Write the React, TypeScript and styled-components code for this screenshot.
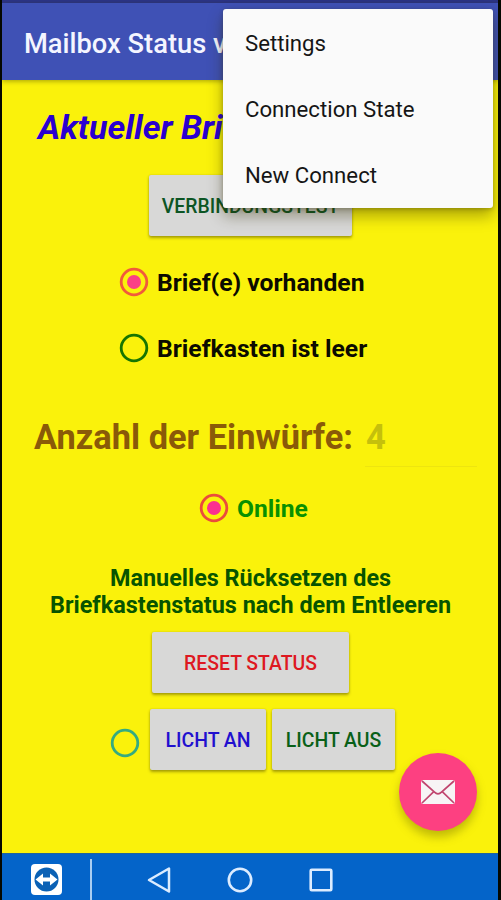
import React from 'react';
import styled, { createGlobalStyle } from 'styled-components';

const GlobalStyle = createGlobalStyle`
  * { box-sizing: border-box; }
  body { margin: 0; background: #000; font-family: Roboto, "Liberation Sans", sans-serif; }
  button { font-family: inherit; }
`;

const Phone = styled.div`
  position: relative;
  width: 501px;
  height: 900px;
  display: flex;
  flex-direction: column;
  overflow: hidden;
  border-left: 2px solid #050800;
  border-right: 3px solid #050800;
  background: #faf20b;
`;

const StatusStrip = styled.div`
  flex: none;
  height: 3px;
  background: #2b3389;
`;

const AppBar = styled.header`
  flex: none;
  height: 77px;
  padding: 4px 0 0 22px;
  display: flex;
  align-items: center;
  background: #3f51b5;
  box-shadow: 0 1px 5px rgba(60, 60, 0, 0.45);
`;

const AppTitle = styled.h1`
  margin: 0;
  color: #f4f5ff;
  font-size: 27.3px;
  font-weight: 500;
  white-space: nowrap;
`;

const Content = styled.main`
  flex: none;
  height: 773px;
  display: flex;
  flex-direction: column;
`;

const Heading = styled.h2`
  margin: 0;
  height: 95px;
  padding-left: 36px;
  line-height: 95px;
  color: #2a00d0;
  font-size: 34px;
  font-style: italic;
  font-weight: 700;
  white-space: nowrap;
`;

const Row = styled.div<{ $height: number; $left: number; $gap?: number; $top?: number }>`
  flex: none;
  display: flex;
  align-items: center;
  height: ${(p) => p.$height}px;
  margin-top: ${(p) => p.$top ?? 0}px;
  padding-left: ${(p) => p.$left}px;
  gap: ${(p) => p.$gap ?? 0}px;
`;

const FlatButton = styled.button<{ $width: number; $color: string }>`
  flex: none;
  width: ${(p) => p.$width}px;
  height: 61px;
  padding: 1px 0 0;
  border: 0;
  border-radius: 2px;
  background: #d8d8d7;
  color: ${(p) => p.$color};
  font-size: 19.4px;
  font-weight: 500;
  white-space: nowrap;
  box-shadow: 0 2px 3px rgba(70, 65, 0, 0.45), 0 0 2px rgba(70, 65, 0, 0.2);
`;

const RadioRing = styled.svg<{ $drop?: number }>`
  flex: none;
  width: 30px;
  height: 30px;
  margin-top: ${(p) => p.$drop ?? 0}px;
`;

const Label = styled.span<{ $color: string; $size: number }>`
  color: ${(p) => p.$color};
  font-size: ${(p) => p.$size}px;
  font-weight: 700;
  white-space: nowrap;
`;

const CountLabel = styled(Label)`
  padding-top: 2px;
`;

const CountField = styled.div`
  width: 112px;
  height: 62px;
  padding-left: 1px;
  border-bottom: 1px solid #eee50f;
  color: #c5c00c;
  font-size: 34.5px;
  font-weight: 700;
  line-height: 64px;
`;

const Note = styled.p`
  margin: 0;
  height: 108px;
  padding: 41px 0 0 1px;
  color: #075400;
  font-size: 23.4px;
  font-weight: 700;
  line-height: 27px;
  text-align: center;
  white-space: nowrap;
`;

const Menu = styled.div`
  position: absolute;
  left: 221px;
  top: 9px;
  width: 270px;
  height: 199px;
  display: flex;
  flex-direction: column;
  border-radius: 3px;
  background: #fafafa;
  box-shadow: 0 8px 15px rgba(50, 45, 0, 0.4), 0 1px 4px rgba(50, 45, 0, 0.3);
`;

const MenuItem = styled.div`
  height: 66px;
  padding: 2px 0 0 22px;
  display: flex;
  align-items: center;
  color: #151515;
  font-size: 22.2px;
  white-space: nowrap;
`;

const Fab = styled.button`
  position: absolute;
  left: 397px;
  top: 753px;
  width: 78px;
  height: 78px;
  padding: 0;
  border: 0;
  border-radius: 50%;
  display: flex;
  align-items: center;
  justify-content: center;
  background: #fd4081;
  box-shadow: 0 6px 10px rgba(90, 85, 0, 0.36);
`;

const NavBar = styled.nav`
  flex: none;
  height: 47px;
  padding: 5px 0 0 28px;
  display: flex;
  align-items: center;
  border-top: 1px solid #21649a;
  background: #0464c9;

  svg { flex: none; display: block; }
`;

const NavDivider = styled.span`
  flex: none;
  width: 2px;
  height: 42px;
  margin: 1px 54px 0 27px;
  background: #a9cdf2;
`;

const NavGap = styled.span`
  flex: none;
  width: 54px;
`;

function Radio({ ring, dot, drop }: { ring: string; dot?: string; drop?: number }) {
  return (
    <RadioRing viewBox="0 0 30 30" $drop={drop}>
      <circle cx="15" cy="15" r="12.8" fill="none" stroke={ring} strokeWidth="2.8" />
      {dot && <circle cx="15" cy="15" r="7" fill={dot} />}
    </RadioRing>
  );
}

export default function App() {
  return (
    <>
      <GlobalStyle />
      <Phone>
        <StatusStrip />
        <AppBar>
          <AppTitle>Mailbox Status v</AppTitle>
        </AppBar>
        <Content>
          <Heading>Aktueller Bri</Heading>
          <Row $height={61} $left={147}>
            <FlatButton $width={203} $color="#0c5524">VERBINDUNGSTEST</FlatButton>
          </Row>
          <Row $height={92} $left={117} $gap={8}>
            <Radio ring="#f15a3b" dot="#fb3f86" />
            <Label $color="#0c0b00" $size={24.7}>Brief(e) vorhanden</Label>
          </Row>
          <Row $height={40} $left={117} $gap={8}>
            <Radio ring="#167500" />
            <Label $color="#0c0b00" $size={24.7}>Briefkasten ist leer</Label>
          </Row>
          <Row $top={12} $height={112} $left={32} $gap={12}>
            <CountLabel $color="#8a5a08" $size={34.4}>Anzahl der Einwürfe:</CountLabel>
            <CountField>4</CountField>
          </Row>
          <Row $height={32} $left={197} $gap={8}>
            <Radio ring="#ea4c3c" dot="#fb2f90" />
            <Label $color="#089000" $size={24.6}>Online</Label>
          </Row>
          <Note>
            Manuelles Rücksetzen des
            <br />
            Briefkastenstatus nach dem Entleeren
          </Note>
          <Row $height={61} $left={150}>
            <FlatButton $width={197} $color="#de1821">RESET STATUS</FlatButton>
          </Row>
          <Row $height={93} $left={108}>
            <Radio ring="#35ab80" drop={6} />
            <Row $height={61} $left={10} $gap={6}>
              <FlatButton $width={116} $color="#2110cf">LICHT AN</FlatButton>
              <FlatButton $width={123} $color="#096018">LICHT AUS</FlatButton>
            </Row>
          </Row>
        </Content>
        <NavBar>
          <svg width="33" height="33" viewBox="0 0 33 33">
            <rect x="1" y="1" width="31" height="31" rx="4" fill="#fff" />
            <circle cx="16.5" cy="16.5" r="12" fill="#0b61b5" />
            <path d="M5.500 16.500l7.500-6v4h7v-4l7.500 6-7.500 6v-4h-7v4z" fill="#fff" />
          </svg>
          <NavDivider />
          <svg width="26" height="30" viewBox="0 0 26 30">
            <path d="M3 15L23 3.500v23z" fill="none" stroke="#dcecff" strokeWidth="2.5" strokeLinejoin="round" />
          </svg>
          <NavGap />
          <svg width="28" height="28" viewBox="0 0 28 28">
            <circle cx="14" cy="14" r="11.2" fill="none" stroke="#dcecff" strokeWidth="2.6" />
          </svg>
          <NavGap />
          <svg width="26" height="26" viewBox="0 0 26 26">
            <rect x="2.700" y="2.700" width="20.600" height="20.600" rx="1" fill="none" stroke="#dcecff" strokeWidth="2.600" />
          </svg>
        </NavBar>
        <Fab aria-label="Mail">
          <svg width="34" height="24" viewBox="0 0 34 24">
            <rect width="34" height="24" rx="2.500" fill="#f7f4f5" />
            <path d="M1 1l12.500 11.200Q17 15.500 20.500 12.200L33 1M1 23l11.500-11.200M33 23L21.500 11.800" fill="none" stroke="#c0456f" strokeWidth="1.700" />
          </svg>
        </Fab>
        <Menu>
          <MenuItem>Settings</MenuItem>
          <MenuItem>Connection State</MenuItem>
          <MenuItem>New Connect</MenuItem>
        </Menu>
      </Phone>
    </>
  );
}
